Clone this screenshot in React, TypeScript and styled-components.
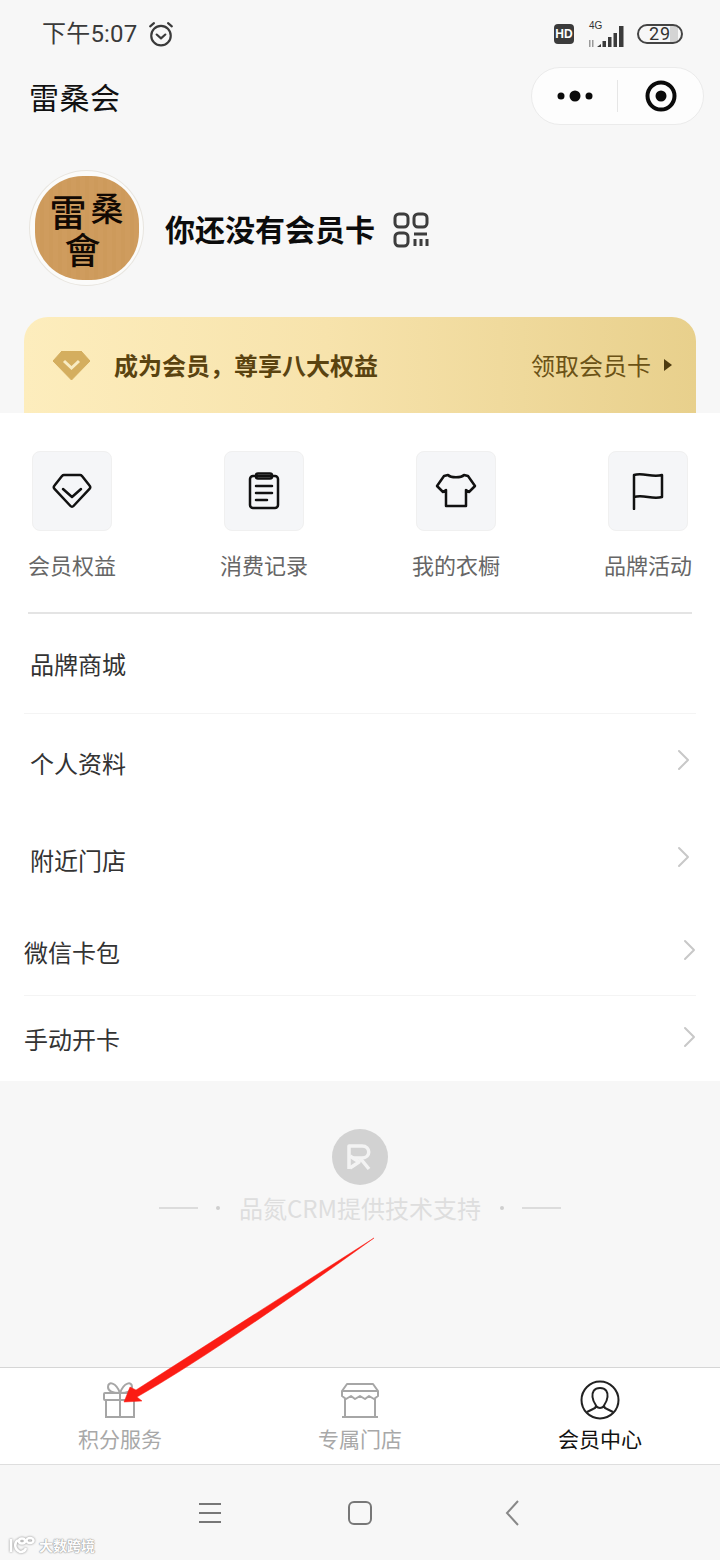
import React from "react";
import styled, { createGlobalStyle } from "styled-components";

const Global = createGlobalStyle`
  html, body { margin: 0; padding: 0; background: #f6f6f6; }
  * { box-sizing: border-box; }
  body { font-family: "Noto Sans CJK SC", "Noto Sans", sans-serif; }
`;

const Page = styled.div`
  position: relative;
  width: 720px;
  height: 1560px;
  overflow: hidden;
  background: #f7f7f7;
  display: flex;
  flex-direction: column;
`;

const StatusBar = styled.div`
  height: 67px;
  flex: none;
  display: flex;
  align-items: center;
  justify-content: space-between;
  padding: 0 37px 0 42px;
  color: #333;
`;
const StatusLeft = styled.div`
  display: flex;
  align-items: center;
  gap: 11px;
`;
const Time = styled.span`
  font-family: Roboto, "Noto Sans CJK SC", sans-serif;
  font-size: 24px;
  line-height: 34px;
  letter-spacing: 0.2px;
  color: #3a3a3a;
`;
const StatusRight = styled.div`
  display: flex;
  align-items: center;
`;
const HdBadge = styled.span`
  width: 20px;
  height: 20px;
  border-radius: 4px;
  background: #3b3b3b;
  color: #fff;
  font: 700 12px/20px "Liberation Sans", sans-serif;
  text-align: center;
  margin-right: 12px;
`;
const Signal = styled.div`
  position: relative;
  width: 40px;
  height: 28px;
  margin-right: 11px;
`;
const SignalLabel = styled.span`
  position: absolute;
  left: 3px;
  top: 1px;
  font: 10px/10px "Liberation Sans", sans-serif;
  color: #333;
`;
const Battery = styled.div`
  width: 46px;
  height: 20px;
  border: 2px solid #444;
  border-radius: 10px;
  overflow: hidden;
  background: linear-gradient(90deg, transparent 74%, #d4d4d4 74%, #d4d4d4 92%, transparent 92%);
  font: 18px/16px Roboto, sans-serif;
  color: #333;
  text-align: center;
  letter-spacing: 1px;
`;

const TitleBar = styled.div`
  height: 58px;
  flex: none;
  display: flex;
  align-items: center;
  justify-content: space-between;
  padding: 0 16px 0 29px;
`;
const Title = styled.h1`
  margin: 0;
  font-size: 30px;
  line-height: 58px;
  font-weight: 400;
  letter-spacing: 0.5px;
  color: #111;
`;
const Capsule = styled.div`
  width: 173px;
  height: 58px;
  border: 1px solid #ebebeb;
  border-radius: 29px;
  background: #fdfdfd;
  display: flex;
  align-items: center;
`;
const CapsuleSide = styled.div`
  flex: 1;
  height: 100%;
  display: flex;
  align-items: center;
  justify-content: center;
`;
const CapsuleDivider = styled.div`
  width: 1px;
  height: 32px;
  background: #e6e6e6;
`;

const Profile = styled.div`
  height: 116px;
  margin-top: 45px;
  flex: none;
  display: flex;
  align-items: center;
  padding-left: 29px;
`;
const Avatar = styled.div`
  width: 115px;
  height: 116px;
  flex: none;
  border-radius: 50%;
  background: #fbfbfa;
  border: 1px solid #e8e5df;
  display: flex;
  align-items: center;
  justify-content: center;
`;
const AvatarArt = styled.div`
  position: relative;
  width: 104px;
  height: 104px;
  border-radius: 46%;
  background: repeating-linear-gradient(90deg, #cf9c5e 0 5px, #cd9a5b 5px 9px);
  overflow: hidden;
  color: #120903;
`;
const AvatarGlyph = styled.span<{ $x: number; $y: number; $s: number }>`
  position: absolute;
  left: ${(p) => p.$x}px;
  top: ${(p) => p.$y}px;
  font-size: ${(p) => p.$s}px;
  line-height: 1;
  font-weight: 500;
`;
const ProfileName = styled.div`
  margin-left: 21px;
  font-size: 30px;
  line-height: 44px;
  font-weight: 700;
  color: #0c0c0c;
`;
const QrIcon = styled.svg`
  margin: 3px 0 0 18px;
  flex: none;
`;

const Banner = styled.div`
  height: 96px;
  margin: 31px 24px 0;
  flex: none;
  border-radius: 24px 24px 0 0;
  background: linear-gradient(90deg, #fdedbd 0%, #f7e3ac 45%, #e8d08c 100%);
  display: flex;
  align-items: center;
  padding: 0 24px 0 29px;
  color: #5a4310;
`;
const BannerTitle = styled.div`
  margin-left: 24px;
  font-size: 24px;
  line-height: 34px;
  font-weight: 700;
  flex: 1;
`;
const BannerAction = styled.div`
  font-size: 24px;
  line-height: 34px;
  color: #6b5216;
`;
const BannerCaret = styled.i`
  width: 0;
  height: 0;
  margin-left: 13px;
  border-left: 8px solid #4d3b10;
  border-top: 6px solid transparent;
  border-bottom: 6px solid transparent;
`;

const Sheet = styled.div`
  height: 668px;
  flex: none;
  background: #fff;
  display: flex;
  flex-direction: column;
`;
const Shortcuts = styled.div`
  height: 201px;
  margin: 0 28px;
  flex: none;
  padding-top: 38px;
  border-bottom: 2px solid #e4e4e4;
  display: flex;
  justify-content: space-between;
`;
const Shortcut = styled.div`
  width: 88px;
  display: flex;
  flex-direction: column;
  align-items: center;
`;
const ShortcutIcon = styled.div`
  width: 80px;
  height: 80px;
  border-radius: 8px;
  background: #f5f6f8;
  border: 1px solid #f0f0f0;
  display: flex;
  align-items: center;
  justify-content: center;
`;
const ShortcutLabel = styled.div`
  margin-top: 17px;
  font-size: 22px;
  line-height: 32px;
  white-space: nowrap;
  color: #666;
`;
const MenuRow = styled.div<{ $h: number; $left: number; $right: number; $line?: boolean }>`
  height: ${(p) => p.$h}px;
  flex: none;
  margin: 0 24px;
  padding: 0 ${(p) => p.$right}px 0 ${(p) => p.$left}px;
  display: flex;
  align-items: center;
  justify-content: space-between;
  font-size: 24px;
  color: #333;
  border-bottom: ${(p) => (p.$line ? "1px solid #f4f4f4" : "0 none")};
`;
const Chevron = styled.svg`
  flex: none;
  margin-top: -4px;
`;

const Support = styled.div`
  height: 286px;
  flex: none;
  padding-top: 48px;
  display: flex;
  flex-direction: column;
  align-items: center;
`;
const SupportLogo = styled.div`
  width: 56px;
  height: 56px;
  border-radius: 50%;
  background: #d2d2d2;
  display: flex;
  align-items: center;
  justify-content: center;
`;
const SupportLine = styled.div`
  margin-top: 5px;
  display: flex;
  align-items: center;
  color: #dedede;
  font-size: 24px;
  line-height: 36px;
`;
const Dash = styled.i`
  width: 39px;
  height: 2px;
  background: #dcdcdc;
`;
const Dot = styled.i<{ $side: "l" | "r" }>`
  width: 4px;
  height: 4px;
  border-radius: 50%;
  background: #cfcfcf;
  margin: ${(p) => (p.$side === "l" ? "0 19px 0 18px" : "0 18px 0 19px")};
`;

const TabBar = styled.nav`
  height: 98px;
  flex: none;
  background: #fff;
  border-top: 1px solid #d6d6d6;
  border-bottom: 1px solid #dedede;
  display: grid;
  grid-template-columns: repeat(3, 1fr);
`;
const Tab = styled.div<{ $on?: boolean }>`
  display: flex;
  flex-direction: column;
  align-items: center;
  padding-top: 12px;
  color: ${(p) => (p.$on ? "#111" : "#a8a8a8")};
  font-size: 21px;
`;
const TabIconBox = styled.div`
  height: 40px;
  flex: none;
  display: flex;
  align-items: center;
  justify-content: center;
`;
const TabLabel = styled.div`
  line-height: 30px;
  margin-top: 3px;
`;

const SystemNav = styled.div`
  flex: 1;
  display: grid;
  grid-template-columns: repeat(3, 150px);
  padding: 0 135px;
  align-items: center;
  justify-items: center;
`;
const BackIcon = styled.svg`
  margin-left: 4px;
`;

const Arrow = styled.svg`
  position: absolute;
  left: 0;
  top: 0;
  pointer-events: none;
`;
const Watermark = styled.div`
  position: absolute;
  left: 8px;
  bottom: 5px;
  display: flex;
  align-items: center;
  gap: 4px;
  font-size: 14px;
  line-height: 20px;
  font-weight: 700;
  color: #fdfdfd;
  text-shadow: 0 0 1px #9a9a9a, 0 0 1px #9a9a9a, 0 0 2px #b0b0b0;
`;
const WatermarkLogo = styled.svg`
  flex: none;
  filter: drop-shadow(0 0 1px #888);
`;

const ROWS = [
  { t: "品牌商城", h: 100, l: 6, r: 0, c: false, line: true },
  { t: "个人资料", h: 96, l: 6, r: 6, c: true, line: false },
  { t: "附近门店", h: 98, l: 6, r: 6, c: true, line: false },
  { t: "微信卡包", h: 88, l: 0, r: 0, c: true, line: true },
  { t: "手动开卡", h: 85, l: 0, r: 0, c: true, line: false },
];

export default function App() {
  return (
    <Page>
      <Global />
      <StatusBar>
        <StatusLeft>
          <Time>下午5:07</Time>
          <svg width="26" height="26" viewBox="0 0 24 24" fill="none" stroke="#3a3a3a" strokeWidth="2" strokeLinecap="round" strokeLinejoin="round">
            <circle cx="12" cy="13.500" r="9" />
            <path d="M8 12.500l4 3.500 4-3.500M2 5l3.500-3M22 5l-3.500-3" />
          </svg>
        </StatusLeft>
        <StatusRight>
          <HdBadge>HD</HdBadge>
          <Signal>
            <SignalLabel>4G</SignalLabel>
            <svg width="40" height="28" viewBox="0 0 40 28" fill="#3b3b3b">
              <path d="M3 27v-7h1.500v7zM6 27v-7h1.500v7z" fill="#9a9a9a" />
              <path d="M11 27l4-3v3zM16.500 27v-6h3.500v6zM22 27v-10h3.500v10zM27.500 27v-14h3.500v14zM33 27V6h4.500v21z" />
            </svg>
          </Signal>
          <Battery>29</Battery>
        </StatusRight>
      </StatusBar>

      <TitleBar>
        <Title>雷桑会</Title>
        <Capsule>
          <CapsuleSide>
            <svg width="38" height="14" viewBox="0 0 38 14" fill="#0a0a0a">
              <circle cx="5" cy="7" r="3.500" />
              <circle cx="19" cy="7" r="5.500" />
              <circle cx="33" cy="7" r="3.500" />
            </svg>
          </CapsuleSide>
          <CapsuleDivider />
          <CapsuleSide>
            <svg width="32" height="32" viewBox="0 0 32 32">
              <circle cx="16" cy="16" r="13.500" fill="none" stroke="#0a0a0a" strokeWidth="4" />
              <circle cx="16" cy="16" r="5.500" fill="#0a0a0a" />
            </svg>
          </CapsuleSide>
        </Capsule>
      </TitleBar>

      <Profile>
        <Avatar>
          <AvatarArt>
            <AvatarGlyph $x={15} $y={17} $s={37}>雷</AvatarGlyph>
            <AvatarGlyph $x={56} $y={15} $s={33}>桑</AvatarGlyph>
            <AvatarGlyph $x={30} $y={54} $s={36}>會</AvatarGlyph>
          </AvatarArt>
        </Avatar>
        <ProfileName>你还没有会员卡</ProfileName>
        <QrIcon width="36" height="36" viewBox="0 0 36 36" fill="none" stroke="#3d3d3d" strokeWidth="3">
          <rect x="2" y="2" width="13" height="13" rx="4" />
          <rect x="21" y="2" width="13" height="13" rx="4" />
          <rect x="2" y="21" width="13" height="13" rx="4" />
          <path d="M21 22h13M22 27v7M28 27v7M34 27v7" />
        </QrIcon>
      </Profile>

      <Banner>
        <svg width="37" height="29" viewBox="0 0 37 29">
          <path d="M9 0h19l9 10-18.500 19L0 10z" fill="#d4ae5f" stroke="#d4ae5f" strokeWidth="1" strokeLinejoin="round" />
          <path d="M11 10l7.500 7 7.500-7" fill="none" stroke="#f8ecc4" strokeWidth="3" />
        </svg>
        <BannerTitle>成为会员，尊享八大权益</BannerTitle>
        <BannerAction>领取会员卡</BannerAction>
        <BannerCaret />
      </Banner>

      <Sheet>
        <Shortcuts>
          <Shortcut>
            <ShortcutIcon>
              <svg width="40" height="36" viewBox="0 0 40 36" fill="none" stroke="#111" strokeWidth="2.500" strokeLinejoin="round" strokeLinecap="round">
                <path d="M12 2h16c1 0 1.500.4 2 1l7.500 9.500c1 1.200 1 2.300 0 3.400L21.500 33c-.9 1-2.100 1-3 0L2.500 15.900c-1-1.100-1-2.200 0-3.400L10 3c.5-.6 1-1 2-1z" />
                <path d="M11 16l9 8 9-8" />
              </svg>
            </ShortcutIcon>
            <ShortcutLabel>会员权益</ShortcutLabel>
          </Shortcut>
          <Shortcut>
            <ShortcutIcon>
              <svg width="32" height="38" viewBox="0 0 32 38" fill="none" stroke="#111" strokeWidth="2.500" strokeLinejoin="round" strokeLinecap="round">
                <rect x="2" y="4" width="28" height="32" rx="3" />
                <rect x="8" y="1.500" width="16" height="5" rx="2" />
                <path d="M8 14h16M8 21h16M8 28h11" />
              </svg>
            </ShortcutIcon>
            <ShortcutLabel>消费记录</ShortcutLabel>
          </Shortcut>
          <Shortcut>
            <ShortcutIcon>
              <svg width="42" height="36" viewBox="0 0 42 36" fill="none" stroke="#111" strokeWidth="2.500" strokeLinejoin="round" strokeLinecap="round">
                <path d="M13 2c3 3 13 3 16 0l4 1 7 10-6 6-3-2v16H11V17l-3 2-6-6 7-10z" />
              </svg>
            </ShortcutIcon>
            <ShortcutLabel>我的衣橱</ShortcutLabel>
          </Shortcut>
          <Shortcut>
            <ShortcutIcon>
              <svg width="32" height="38" viewBox="0 0 32 38" fill="none" stroke="#111" strokeWidth="2.500" strokeLinejoin="round" strokeLinecap="round">
                <path d="M2 37V3c9-3 18 3 28 0v22c-10 3-18-3-28 0" />
              </svg>
            </ShortcutIcon>
            <ShortcutLabel>品牌活动</ShortcutLabel>
          </Shortcut>
        </Shortcuts>
        {ROWS.map((r) => (
          <MenuRow key={r.t} $h={r.h} $left={r.l} $right={r.r} $line={r.line}>
            {r.t}
            {r.c ? (
              <Chevron width="13" height="22" viewBox="0 0 13 22" fill="none" stroke="#c8c8c8" strokeWidth="2" strokeLinecap="round" strokeLinejoin="round">
                <path d="M2 2l9 9-9 9" />
              </Chevron>
            ) : null}
          </MenuRow>
        ))}
      </Sheet>

      <Support>
        <SupportLogo>
          <svg width="28" height="28" viewBox="0 0 28 28" fill="none" stroke="#f3f3f3" strokeWidth="3.500" strokeLinejoin="round">
            <path d="M3 26V3h13c9 0 9 12 0 12H7" />
            <path d="M4 13l9 6-9 6M14 15l9 11" />
          </svg>
        </SupportLogo>
        <SupportLine>
          <Dash />
          <Dot $side="l" />
          品氮CRM提供技术支持
          <Dot $side="r" />
          <Dash />
        </SupportLine>
      </Support>

      <TabBar>
        <Tab>
          <TabIconBox>
            <svg width="36" height="36" viewBox="0 0 36 36" fill="none" stroke="#a6a6a6" strokeWidth="2">
              <rect x="2" y="11" width="32" height="7" rx="1" />
              <rect x="4" y="18" width="28" height="17" />
              <path d="M18 11v24M18 11C14 0 6-1 6 5c0 4 5 6 12 6zM18 11c4-11 12-12 12-6 0 4-5 6-12 6z" />
            </svg>
          </TabIconBox>
          <TabLabel>积分服务</TabLabel>
        </Tab>
        <Tab>
          <TabIconBox>
            <svg width="40" height="36" viewBox="0 0 40 36" fill="none" stroke="#a6a6a6" strokeWidth="2" strokeLinejoin="round">
              <path d="M5 17v18h30V17M2 35h36" />
              <path d="M7 2h26l5 7v5l-4 3-5-3-4 3-5-3-5 3-4-3-5 3-4-3V9z" />
              <path d="M2 9h36" />
            </svg>
          </TabIconBox>
          <TabLabel>专属门店</TabLabel>
        </Tab>
        <Tab $on>
          <TabIconBox>
            <svg width="40" height="40" viewBox="0 0 40 40" fill="none" stroke="#222" strokeWidth="2">
              <circle cx="20" cy="20" r="18.500" />
              <path d="M20 8c-6 0-8 4-7.500 9 .4 4 2.500 7 3.500 8.500 0 2-1 3-3 3.500l-6 3M20 8c6 0 8 4 7.500 9-.4 4-2.500 7-3.500 8.500 0 2 1 3 3 3.500l6 3M16 26c2.500 2.500 5.500 2.500 8 0" />
            </svg>
          </TabIconBox>
          <TabLabel>会员中心</TabLabel>
        </Tab>
      </TabBar>

      <SystemNav>
        <svg width="24" height="22" viewBox="0 0 24 22" stroke="#777" strokeWidth="2">
          <path d="M1 2h22M1 11h22M1 20h22" />
        </svg>
        <svg width="24" height="24" viewBox="0 0 24 24" fill="none" stroke="#777" strokeWidth="2">
          <rect x="1" y="1" width="22" height="22" rx="5" />
        </svg>
        <BackIcon width="14" height="26" viewBox="0 0 14 26" fill="none" stroke="#888" strokeWidth="2">
          <path d="M13 1L2 13l11 12" />
        </BackIcon>
      </SystemNav>

      <Arrow width="720" height="1560" viewBox="0 0 720 1560">
        <path d="M374 1238L136 1390L130 1387L124 1402L142 1401L137 1397Q216 1352 374 1238Z" fill="#fb1c14" stroke="#fb1c14" strokeWidth="0.500" strokeLinejoin="round" />
      </Arrow>
      <Watermark>
        <WatermarkLogo width="27" height="18" viewBox="0 0 27 18" fill="none" stroke="#fff" strokeWidth="2.500">
          <path d="M3 3v13M10 4c-4 3-4 9 2 12 3 0 5-1 6-4" />
          <ellipse cx="14" cy="5" rx="3" ry="2.500" />
          <ellipse cx="22" cy="4.500" rx="3.500" ry="2.500" />
        </WatermarkLogo>
        大数跨境
      </Watermark>
    </Page>
  );
}
